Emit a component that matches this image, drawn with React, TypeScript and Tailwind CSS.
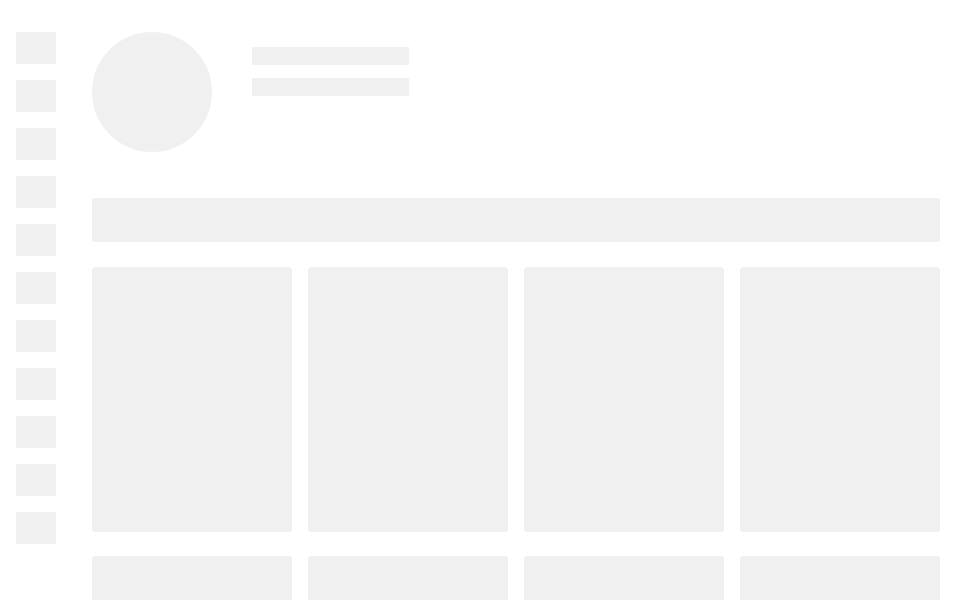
import React from "react";

const Block = ({ className = "" }: { className?: string }) => (
  <div className={`bg-[#f0f0f0] ${className}`} />
);

export default function App() {
  const navItems = Array.from({ length: 11 });
  const cards = Array.from({ length: 8 });

  return (
    <div className="flex h-[600px] w-[960px] overflow-hidden bg-white font-['Liberation_Sans',sans-serif]">
      {/* sidebar skeleton */}
      <aside className="flex flex-col gap-4 pl-4 pt-8">
        {navItems.map((_, i) => (
          <Block key={i} className="h-8 w-10 rounded-[2px]" />
        ))}
      </aside>

      {/* main skeleton */}
      <main className="ml-9 flex-1 pr-5 pt-8">
        <div className="flex items-start gap-10">
          <Block className="h-[120px] w-[120px] rounded-full" />
          <div className="flex flex-col gap-[13px] pt-[15px]">
            <Block className="h-[18px] w-[157px]" />
            <Block className="h-[18px] w-[157px]" />
          </div>
        </div>

        <Block className="mt-[46px] h-[44px] w-full rounded-[2px]" />

        <div className="mt-[25px] grid grid-cols-4 gap-x-4 gap-y-6">
          {cards.map((_, i) => (
            <Block key={i} className="h-[265px] rounded" />
          ))}
        </div>
      </main>
    </div>
  );
}
